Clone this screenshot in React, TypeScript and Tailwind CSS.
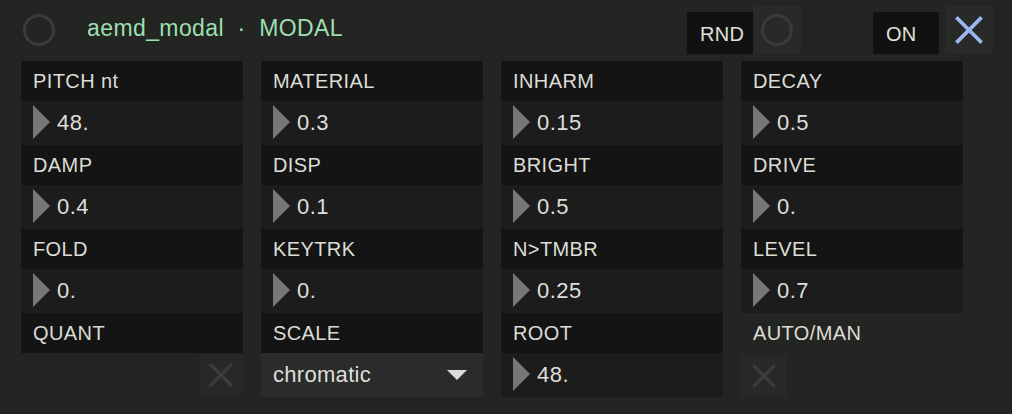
import React from "react";

type Cell =
    | { label: string; kind: "num"; value: string }
    | { label: string; kind: "toggle"; bare?: boolean; align: "left" | "right" }
    | { label: string; kind: "menu"; value: string };

const columns: Cell[][] = [
    [
        { label: "PITCH nt", kind: "num", value: "48." },
        { label: "DAMP", kind: "num", value: "0.4" },
        { label: "FOLD", kind: "num", value: "0." },
        { label: "QUANT", kind: "toggle", align: "right" },
    ],
    [
        { label: "MATERIAL", kind: "num", value: "0.3" },
        { label: "DISP", kind: "num", value: "0.1" },
        { label: "KEYTRK", kind: "num", value: "0." },
        { label: "SCALE", kind: "menu", value: "chromatic" },
    ],
    [
        { label: "INHARM", kind: "num", value: "0.15" },
        { label: "BRIGHT", kind: "num", value: "0.5" },
        { label: "N>TMBR", kind: "num", value: "0.25" },
        { label: "ROOT", kind: "num", value: "48." },
    ],
    [
        { label: "DECAY", kind: "num", value: "0.5" },
        { label: "DRIVE", kind: "num", value: "0." },
        { label: "LEVEL", kind: "num", value: "0.7" },
        { label: "AUTO/MAN", kind: "toggle", bare: true, align: "left" },
    ],
];

function Ring() {
    return (
        <svg width="34" height="34" viewBox="0 0 34 34">
            <circle cx="17" cy="17" r="14.5" fill="none" stroke="#3a3b3a" strokeWidth="3" />
        </svg>
    );
}

function Cross({ color, size, stroke }: { color: string; size: number; stroke: number }) {
    return (
        <svg width={size} height={size} viewBox="0 0 24 24">
            <path d="M3 3 L21 21 M21 3 L3 21" stroke={color} strokeWidth={stroke} strokeLinecap="square" />
        </svg>
    );
}

function CellView({ cell }: { cell: Cell }) {
    const bare = cell.kind === "toggle" && cell.bare;
    return (
        <div className="flex flex-col">
            <div
                className={`h-10 flex items-center pl-3 text-[20px] tracking-[0.4px] text-[#dcddd5] ${
                    bare ? "" : "bg-[#141414]"
                }`}
            >
                {cell.label}
            </div>
            {cell.kind === "num" && (
                <div className="h-11 bg-[#1b1c1b] flex items-center pl-3">
                    <svg width="18" height="34" viewBox="0 0 18 34" className="mt-[-3px]">
                        <polygon points="0,0 17,17 0,34" fill="#777777" />
                    </svg>
                    <span className="ml-[6px] mt-[-2px] text-[22px] tracking-[0.5px] text-[#dedfd8]">{cell.value}</span>
                </div>
            )}
            {cell.kind === "menu" && (
                <div className="h-11 bg-[#2b2b2b] flex items-center justify-between pl-3 pr-4">
                    <span className="mt-[-2px] text-[22px] tracking-[0.3px] text-[#dedfd8]">{cell.value}</span>
                    <svg width="20" height="10" viewBox="0 0 20 10">
                        <polygon points="0,0 20,0 10,10" fill="#dcdcdc" />
                    </svg>
                </div>
            )}
            {cell.kind === "toggle" && (
                <div className={`h-11 flex ${cell.align === "right" ? "justify-end" : "justify-start"}`}>
                    <div
                        className={`flex items-center justify-center bg-[#272827] ${
                            cell.align === "right" ? "w-11 h-10 mt-[2px]" : "w-[45px] h-11 mt-[1px]"
                        }`}
                    >
                        <Cross color="#3b3c3b" size={26} stroke={3} />
                    </div>
                </div>
            )}
        </div>
    );
}

export default function App() {
    return (
        <div
            className="w-[1012px] h-[414px] bg-[#232523] overflow-hidden"
            style={{ fontFamily: '"Liberation Sans", Arial, sans-serif' }}
        >
            <div className="h-[61px] flex items-start pt-[6px] pl-[22px] pr-[19px]">
                <div className="mt-[7px]">
                    <Ring />
                </div>
                <div className="ml-[31px] h-[44px] flex items-center text-[23px] tracking-[0.4px] text-[#9edfb0]">
                    aemd_modal&nbsp;&nbsp;·&nbsp;&nbsp;MODAL
                </div>
                <div className="flex-1" />
                <div className="mt-[6px] w-[66px] h-[42px] bg-[#111111] flex items-center pl-[13px] text-[20px] tracking-[0.3px] text-[#e0e1da] pt-[2px]">
                    RND
                </div>
                <div className="w-12 h-12 bg-[#282928] flex items-center justify-center">
                    <Ring />
                </div>
                <div className="ml-[72px] mt-[6px] w-[66px] h-[42px] bg-[#111111] flex items-center pl-[13px] text-[20px] tracking-[0.3px] text-[#e0e1da] pt-[2px]">
                    ON
                </div>
                <div className="ml-[6px] w-12 h-12 bg-[#282a28] flex items-center justify-center">
                    <Cross color="#9cb6ef" size={30} stroke={3} />
                </div>
            </div>
            <div className="grid grid-cols-4 gap-x-[18px] px-[21px] w-[984px]">
                {columns.map((col, i) => (
                    <div key={i} className="flex flex-col">
                        {col.map((cell, j) => (
                            <CellView key={j} cell={cell} />
                        ))}
                    </div>
                ))}
            </div>
        </div>
    );
}
